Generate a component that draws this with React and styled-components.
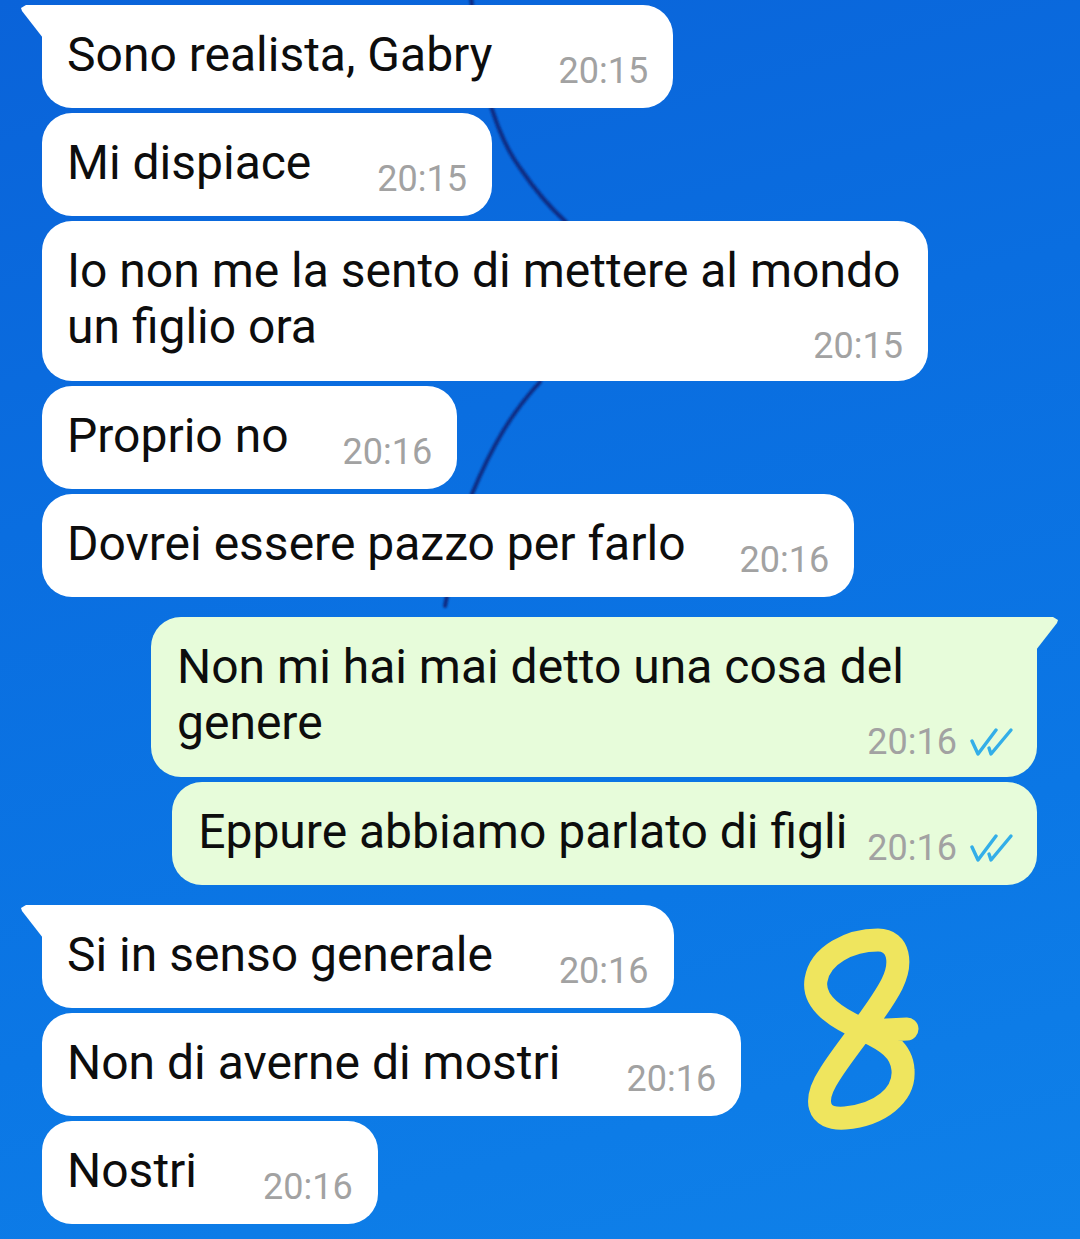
import React from 'react';
import styled, { createGlobalStyle, css } from 'styled-components';

const GlobalStyle = createGlobalStyle`
  html, body {
    margin: 0;
    padding: 0;
    background: #0a6ddd;
  }
  * {
    box-sizing: border-box;
  }
`;

const messages = [
  { side: 'in', tail: true, text: 'Sono realista, Gabry', time: '20:15' },
  { side: 'in', text: 'Mi dispiace', time: '20:15' },
  { side: 'in', stacked: true, text: 'Io non me la sento di mettere al mondo un figlio ora', time: '20:15' },
  { side: 'in', text: 'Proprio no', time: '20:16', gap: 54 },
  { side: 'in', text: 'Dovrei essere pazzo per farlo', time: '20:16', gap: 54 },
  { side: 'out', tail: true, stacked: true, text: 'Non mi hai mai detto una cosa del genere', time: '20:16' },
  { side: 'out', text: 'Eppure abbiamo parlato di figli', time: '20:16', gap: 20 },
  { side: 'in', tail: true, text: 'Si in senso generale', time: '20:16' },
  { side: 'in', text: 'Non di averne di mostri', time: '20:16' },
  { side: 'in', text: 'Nostri', time: '20:16' },
];

const ReadTicks = () => (
  <svg width="44" height="30" viewBox="0 0 44 30" fill="none">
    <path d="M2 14 L8 27 L26 3" stroke="#33aee8" strokeWidth="3.4" strokeLinecap="round" strokeLinejoin="round" />
    <path d="M19 21 L21 27 L41 3" stroke="#33aee8" strokeWidth="3.4" strokeLinecap="round" strokeLinejoin="round" />
  </svg>
);

const Wallpaper = () => (
  <WallpaperSvg viewBox="0 0 1080 1239" preserveAspectRatio="none">
    <defs>
      <filter id="soft">
        <feGaussianBlur stdDeviation="0.9" />
      </filter>
    </defs>
    <g stroke="#0a2c82" strokeWidth="4" fill="none" filter="url(#soft)" strokeLinecap="round">
      <path d="M471 -4 C476 60 492 130 520 168 C535 190 548 206 566 222" />
      <path d="M540 382 C512 412 492 446 472 494" />
      <path d="M447 596 L445 606" />
    </g>
  </WallpaperSvg>
);

const Doodle = () => (
  <DoodleSvg viewBox="790 915 140 230" width="140" height="230">
    <path
      d="M907 1029 L866 1031 C840 1020 812 1004 816 980 C820 955 850 940 878 940
         C900 940 902 964 892 984 C878 1012 846 1048 830 1074 C813 1100 816 1120 845 1118
         C880 1115 905 1095 903 1070 C902 1050 885 1040 866 1031"
      stroke="#efe55e"
      strokeWidth="23"
      fill="none"
      strokeLinecap="round"
      strokeLinejoin="round"
    />
  </DoodleSvg>
);

export default function App() {
  return (
    <Screen>
      <GlobalStyle />
      <Wallpaper />
      <Thread>
        {messages.map((m, i) => (
          <Bubble key={i} $side={m.side} $tail={m.tail} $stacked={m.stacked} $first={i === 0}>
            <Text $stacked={m.stacked}>{m.text}</Text>
            <Meta $side={m.side} $stacked={m.stacked} $gap={m.gap}>
              <Time>{m.time}</Time>
              {m.side === 'out' && <ReadTicks />}
            </Meta>
          </Bubble>
        ))}
      </Thread>
      <Doodle />
    </Screen>
  );
}

const Screen = styled.div`
  position: relative;
  width: 1080px;
  height: 1239px;
  overflow: hidden;
  background: linear-gradient(165deg, #0a63d9 0%, #0a6ee0 35%, #0b77e5 70%, #0f81e9 100%);
  font-family: Roboto, "Noto Sans", "Liberation Sans", sans-serif;
`;

const WallpaperSvg = styled.svg`
  position: absolute;
  inset: 0;
  width: 100%;
  height: 100%;
`;

const DoodleSvg = styled.svg`
  position: absolute;
  left: 790px;
  top: 915px;
`;

const Thread = styled.div`
  position: relative;
  display: flex;
  flex-direction: column;
  gap: 5px;
  padding: 5px 43px 0 42px;
`;

const Bubble = styled.div`
  position: relative;
  display: flex;
  flex-direction: ${(p) => (p.$stacked ? 'column' : 'row')};
  align-items: flex-end;
  max-width: 886px;
  border-radius: 30px;
  background: ${(p) => (p.$side === 'out' ? '#e7fcda' : '#ffffff')};
  color: #0d0d0d;
  align-self: ${(p) => (p.$side === 'out' ? 'flex-end' : 'flex-start')};
  padding: ${(p) => (p.$side === 'out' ? '22px 23px 16px 26px' : '22px 25px 16px 25px')};
  ${(p) => p.$stacked && css`padding-bottom: 14px;`}
  ${(p) => p.$tail && !p.$first && css`margin-top: 15px;`}

  ${(p) =>
    p.$tail &&
    (p.$side === 'out'
      ? css`
          border-top-right-radius: 0;
          &::before {
            content: '';
            position: absolute;
            top: 0;
            right: -21px;
            width: 22px;
            height: 33px;
            background: #e7fcda;
            clip-path: polygon(0 0, 17px 0, 22px 3px, 21px 6px, 0 100%);
          }
        `
      : css`
          border-top-left-radius: 0;
          &::before {
            content: '';
            position: absolute;
            top: 0;
            left: -21px;
            width: 22px;
            height: 33px;
            background: #ffffff;
            clip-path: polygon(5px 0, 100% 0, 100% 100%, 1px 6px, 0 3px);
          }
        `)}
`;

const Text = styled.div`
  font-size: 48px;
  line-height: 56px;
  padding-bottom: ${(p) => (p.$stacked ? '0' : '9px')};
  align-self: flex-start;
`;

const Meta = styled.div`
  display: flex;
  align-items: center;
  gap: 13px;
  flex-shrink: 0;
  margin-left: ${(p) => (p.$stacked ? 0 : p.$gap ?? 66)}px;
  ${(p) => p.$stacked && css`margin-top: -30px;`}
`;

const Time = styled.span`
  font-size: 36px;
  line-height: 42px;
  color: #a2a2a2;
`;
